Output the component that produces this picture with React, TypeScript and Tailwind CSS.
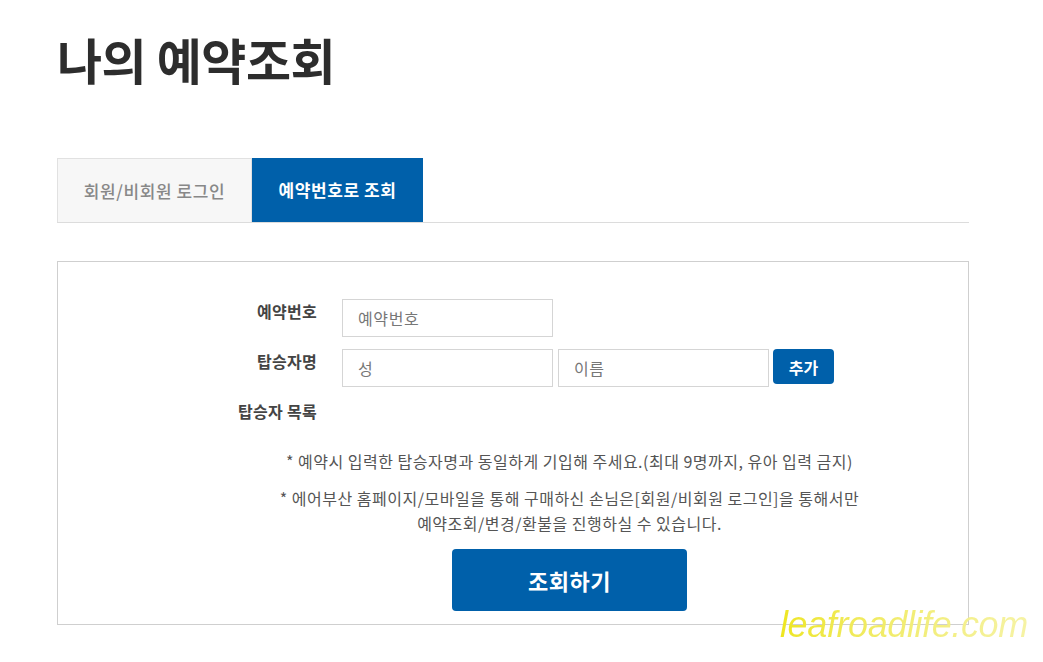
const font = { fontFamily: '"Noto Sans CJK KR", "Noto Sans", sans-serif' };

const Field = ({ placeholder }: { placeholder: string }) => (
  <input
    placeholder={placeholder}
    className="w-[211px] h-[38px] border border-[#d5d5d5] bg-white px-[15px] text-[16px] tracking-[0.6px] text-[#333] placeholder:text-[#777] outline-none"
  />
);

const Label = ({ children }: { children: string }) => (
  <span className="w-[259px] text-right text-[16px] font-bold leading-[24px] tracking-[0.3px] text-[#444]">{children}</span>
);

const App = () => {
  return (
    <div className="relative min-h-[662px] w-[1043px] overflow-hidden bg-white pl-[57px] pt-[24px]" style={font}>
      <h1 className="text-[49px] font-bold leading-[70px] text-[#2d2d2d] tracking-[-0.5px]">나의 예약조회</h1>

      {/* TABS */}
      <div className="mt-[64px] flex w-[912px] border-b border-[#dcdcdc]">
        <button className="h-[64px] w-[195px] border border-b-0 border-[#e1e1e1] bg-[#f7f7f7] text-[17px] font-medium tracking-[0.6px] text-[#888]">
          회원/비회원 로그인
        </button>
        <button className="h-[64px] w-[171px] bg-[#0060aa] text-[17px] font-bold tracking-[0.6px] text-white">
          예약번호로 조회
        </button>
      </div>

      {/* FORM */}
      <div className="mt-[38px] w-[912px] border border-[#cfcfcf] pt-[37px] pb-[13px]">
        <div className="flex flex-col gap-[12px]">
          <div className="flex items-start gap-[25px]">
            <Label>예약번호</Label>
            <Field placeholder="예약번호" />
          </div>
          <div className="flex items-start gap-[25px]">
            <Label>탑승자명</Label>
            <div className="flex items-start gap-[5px]">
              <Field placeholder="성" />
              <Field placeholder="이름" />
              <button className="ml-[-1px] h-[35px] w-[61px] rounded-[4px] bg-[#0060aa] text-[16px] font-bold text-white">
                추가
              </button>
            </div>
          </div>
          <div className="flex items-start gap-[25px]">
            <Label>탑승자 목록</Label>
          </div>
        </div>

        <div className="pl-[113px] text-center text-[16px] leading-[25px] tracking-[0.5px] text-[#555]">
          <p className="mt-[26px]">* 예약시 입력한 탑승자명과 동일하게 기입해 주세요.(최대 9명까지, 유아 입력 금지)</p>
          <p className="mt-[12px]">* 에어부산 홈페이지/모바일을 통해 구매하신 손님은[회원/비회원 로그인]을 통해서만</p>
          <p>예약조회/변경/환불을 진행하실 수 있습니다.</p>
          <button className="mt-[13px] h-[62px] w-[235px] rounded-[4px] bg-[#0060aa] text-[22px] font-bold text-white">
            조회하기
          </button>
        </div>
      </div>

      <span
        className="absolute left-[780px] top-[602px] bg-gradient-to-r from-[#eee61c] to-[#f6f3a6] bg-clip-text pr-[4px] text-[36px] italic leading-[46px] tracking-[-0.4px] text-transparent"
        style={{ fontFamily: '"Liberation Sans", sans-serif' }}
      >
        leafroadlife.com
      </span>
    </div>
  );
};

export default App;
